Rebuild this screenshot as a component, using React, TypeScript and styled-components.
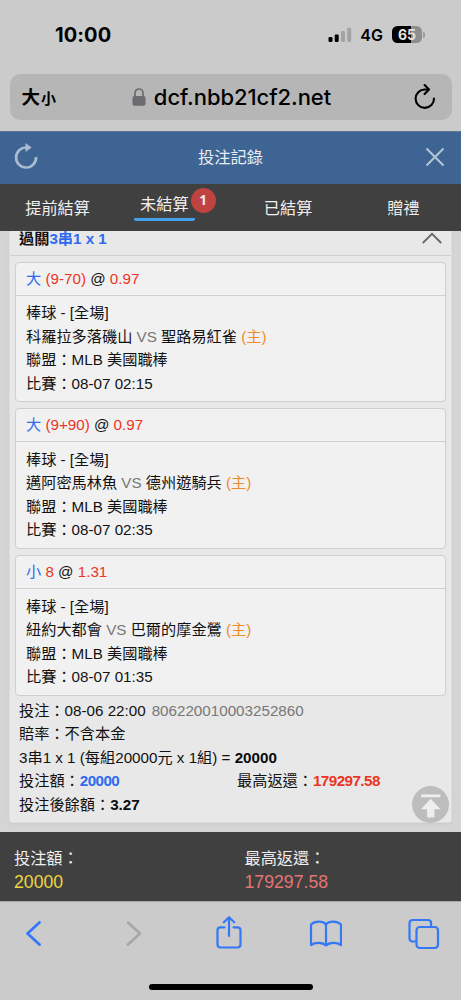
import React from "react";
import styled, { createGlobalStyle } from "styled-components";

const Global = createGlobalStyle`
  *, *::before, *::after { box-sizing: border-box; }
  body { margin: 0; background: #cbcbcb; }
  button { border: 0; padding: 0; background: none; font: inherit; color: inherit; }
  svg { display: block; flex: none; }
`;

const Screen = styled.div`
  width: 461px;
  height: 1000px;
  display: flex;
  flex-direction: column;
  overflow: hidden;
  background: #cbcbcb;
  color: #111;
  font-family: "Liberation Sans", "Noto Sans CJK TC", sans-serif;
`;

const StatusBar = styled.div`
  height: 74px;
  flex: none;
  display: flex;
  align-items: center;
  justify-content: space-between;
  padding: 0 36px 5px 55px;
  font-family: Inter, sans-serif;
  color: #000;
`;
const Clock = styled.span`
  font-size: 20px;
  font-weight: 700;
  line-height: 24px;
  letter-spacing: 0.1px;
`;
const StatusRight = styled.div`
  display: flex;
  align-items: center;
`;
const Network = styled.span`
  margin: 1px 9px 0 8px;
  font-size: 16px;
  font-weight: 600;
  line-height: 20px;
`;
const Battery = styled.span`
  width: 30px;
  height: 17px;
  border-radius: 5.5px;
  background: linear-gradient(90deg, #000 64%, #8e8e8e 64%);
  color: #e4e4e4;
  font-size: 14px;
  font-weight: 700;
  line-height: 17px;
  text-align: center;
`;
const BatteryTip = styled.span`
  width: 2px;
  height: 6px;
  margin-left: 1px;
  border-radius: 0 2px 2px 0;
  background: #999;
`;

const AddressArea = styled.div`
  height: 57px;
  flex: none;
  padding: 0 9.5px;
`;
const AddressBar = styled.div`
  height: 45.5px;
  border-radius: 10px;
  background: #b6b6b6;
  display: grid;
  grid-template-columns: 112px 1fr 110px;
  align-items: center;
  color: #000;
`;
const TextSize = styled.span`
  padding-left: 12px;
  font-family: "Noto Sans CJK TC", sans-serif;
  font-weight: 700;
  font-size: 18.5px;
  line-height: 24px;
  small { font-size: 15px; margin-left: 1px; }
`;
const Url = styled.div`
  display: flex;
  align-items: center;
  justify-content: center;
  gap: 8px;
  white-space: nowrap;
  font: 500 22px/28px Inter, sans-serif;
  letter-spacing: -0.05px;
`;
const Reload = styled.button`
  justify-self: end;
  margin-right: 16px;
`;

const TitleBar = styled.header`
  height: 53px;
  flex: none;
  display: grid;
  grid-template-columns: 52px 1fr 52px;
  align-items: center;
  border-top: 1px solid #5d7696;
  padding-bottom: 2px;
  background: #3e6493;
  color: #e8edf3;
  text-align: center;
  font-size: 16.3px;
  line-height: 24px;
  button { display: flex; justify-content: center; }
`;

const Tabs = styled.nav`
  height: 47px;
  flex: none;
  display: grid;
  grid-template-columns: repeat(4, 1fr);
  background: #404040;
  color: #efefef;
  font-size: 16.2px;
  line-height: 24px;
`;
const Tab = styled.button<{ $active?: boolean }>`
  display: flex;
  justify-content: center;
  align-items: flex-start;
  padding: ${(p) => (p.$active ? "8px 0 0 4px" : "12px 0 0")};
`;
const TabLabel = styled.span<{ $active?: boolean }>`
  height: 29px;
  padding: 0 6px;
  border-bottom: 3px solid ${(p) => (p.$active ? "#43a0ec" : "transparent")};
  border-radius: 2px;
`;
const Badge = styled.span`
  width: 25px;
  height: 25px;
  margin: -4px 0 0 -4px;
  border-radius: 50%;
  background: #bf4341;
  color: #f2e9e9;
  font: 700 13.5px/24px "Noto Sans", sans-serif;
`;

const Scroll = styled.main`
  flex: 1;
  min-height: 0;
  overflow: hidden;
  background: #d5d5d5;
  padding: 0 9px;
`;
const Slip = styled.section`
  height: 592px;
  border: solid #dedede;
  border-width: 0 1px 1px;
  border-radius: 0 0 4px 4px;
  background: #e8e8e8;
  box-shadow: 0 1px 3px #c9c9c9;
  font-size: 15.2px;
`;
const SlipHead = styled.div`
  height: 24.5px;
  display: flex;
  justify-content: space-between;
  padding: 0 9px;
  border-bottom: 1px solid #cfcfcf;
  font-weight: 700;
  line-height: 15px;
  svg { margin-top: 1px; }
`;
const Legs = styled.div`
  display: flex;
  flex-direction: column;
  gap: 6.3px;
  padding: 6px 5px 0;
`;
const Leg = styled.article`
  height: 140.5px;
  border: 1px solid #cfcfcf;
  border-radius: 4px;
  background: #f1f1f1;
`;
const LegHead = styled.div`
  height: 33px;
  padding: 0 10px;
  border-bottom: 1px solid #d0d0d0;
  line-height: 32px;
`;
const LegBody = styled.div`
  padding: 5.7px 10px 0;
  line-height: 23.5px;
  white-space: nowrap;
`;
const Tone = styled.span<{ $c: string }>`
  color: ${(p) => p.$c};
`;
const Bold = styled.b`
  color: #0b0b0b;
`;
const Amount = styled.b<{ $c: string }>`
  color: ${(p) => p.$c};
  letter-spacing: -0.55px;
`;
const Summary = styled.div`
  padding: 3.2px 9px 0;
  line-height: 23.5px;
`;
const Amounts = styled.div`
  display: grid;
  grid-template-columns: 218px 1fr;
`;
const Serial = styled.span`
  margin-left: 6px;
  color: #777;
`;
const ToTop = styled.button`
  position: absolute;
  left: 412px;
  top: 786px;
  width: 37px;
  height: 37px;
  border-radius: 50%;
  background: #bdbdbd;
`;

const Totals = styled.footer`
  height: 70px;
  flex: none;
  display: grid;
  grid-template-columns: 1fr 1fr;
  background: #404040;
  border-bottom: 1px solid #a5a5a5;
  color: #efefef;
  font-size: 16.2px;
`;
const Total = styled.div<{ $c: string }>`
  position: relative;
  padding: 14px 14px 0;
  line-height: 24px;
  strong {
    display: block;
    font-weight: 400;
    font-size: 17.7px;
    color: ${(p) => p.$c};
  }
  & + &::before {
    content: "";
    position: absolute;
    left: 0;
    top: 24px;
    width: 1px;
    height: 23px;
    background: #676767;
  }
`;

const BrowserTools = styled.div`
  height: 63px;
  flex: none;
  display: flex;
  justify-content: space-between;
  align-items: center;
  padding: 0 20px 1px 17px;
`;
const HomeArea = styled.div`
  height: 35px;
  flex: none;
  display: flex;
  justify-content: center;
  align-items: flex-start;
  padding-top: 19px;
`;
const HomeBar = styled.div`
  width: 164px;
  height: 6px;
  border-radius: 3px;
  background: #000;
`;

const BLUE = "#2f6bf0";
const RED = "#ee3425";
const ORANGE = "#f08c2b";
const IOS = "#3478f6";

const games = [
  { pick: "大", line: "(9-70)", odds: "0.97", away: "科羅拉多落磯山", home: "聖路易紅雀", time: "08-07 02:15" },
  { pick: "大", line: "(9+90)", odds: "0.97", away: "邁阿密馬林魚", home: "德州遊騎兵", time: "08-07 02:35" },
  { pick: "小", line: "8", odds: "1.31", away: "紐約大都會", home: "巴爾的摩金鶯", time: "08-07 01:35" },
];

export default function App() {
  return (
    <Screen>
      <Global />
      <StatusBar>
        <Clock>10:00</Clock>
        <StatusRight>
          <svg width="24" height="16" viewBox="0 0 24 16">
            <rect x="0.5" y="10" width="4" height="5" rx="1.2" fill="#000" />
            <rect x="6.7" y="7.4" width="4" height="7.6" rx="1.2" fill="#000" />
            <rect x="13" y="4" width="4" height="11" rx="1.2" fill="#a3a3a3" />
            <rect x="19.2" y="0.7" width="4" height="14.3" rx="1.2" fill="#a3a3a3" />
          </svg>
          <Network>4G</Network>
          <Battery>65</Battery>
          <BatteryTip />
        </StatusRight>
      </StatusBar>
      <AddressArea>
        <AddressBar>
          <TextSize>大<small>小</small></TextSize>
          <Url>
            <svg width="14" height="18" viewBox="0 0 14 18">
              <path d="M3 9V5a4 4 0 0 1 8 0v4" fill="none" stroke="#6c6c70" strokeWidth="1.7" />
              <rect x="0.5" y="8" width="13" height="9.7" rx="2" fill="#6c6c70" />
            </svg>
            <span>dcf.nbb21cf2.net</span>
          </Url>
          <Reload aria-label="reload">
            <svg width="22" height="26" viewBox="0 0 22 26" fill="none" stroke="#000" strokeWidth="2.1" strokeLinecap="round" strokeLinejoin="round">
              <path d="M14 5.500H10.800A9.200 9.200 0 1 0 20 14.500" />
              <path d="M10.600 1l4.400 4.500-4.400 4.600" />
            </svg>
          </Reload>
        </AddressBar>
      </AddressArea>
      <TitleBar>
        <button aria-label="refresh">
          <svg width="26" height="28" viewBox="0 0 26 28">
            <path d="M13.500 4.500A10 10 0 1 0 23.100 14" fill="none" stroke="#a9bbd0" strokeWidth="2.7" />
            <path d="M12.500 0l6.200 4.500-6.200 4.400z" fill="#a9bbd0" />
          </svg>
        </button>
        <span>投注記錄</span>
        <button aria-label="close">
          <svg width="20" height="20" viewBox="0 0 20 20" stroke="#b5c4d6" strokeWidth="2">
            <path d="M1.500 1.500l17 17M18.500 1.500l-17 17" />
          </svg>
        </button>
      </TitleBar>
      <Tabs>
        <Tab><TabLabel>提前結算</TabLabel></Tab>
        <Tab $active>
          <TabLabel $active>未結算</TabLabel>
          <Badge>1</Badge>
        </Tab>
        <Tab><TabLabel>已結算</TabLabel></Tab>
        <Tab><TabLabel>贈禮</TabLabel></Tab>
      </Tabs>
      <Scroll>
        <Slip>
          <SlipHead>
            <span>過關<Tone $c={BLUE}>3串1 x 1</Tone></span>
            <svg width="20" height="12" viewBox="0 0 20 12" fill="none" stroke="#666" strokeWidth="1.8">
              <path d="M0.800 11L10 1.800 19.200 11" />
            </svg>
          </SlipHead>
          <Legs>
            {games.map((g) => (
              <Leg key={g.away}>
                <LegHead>
                  <Tone $c={BLUE}>{g.pick}</Tone> <Tone $c={RED}>{g.line}</Tone> @ <Tone $c={RED}>{g.odds}</Tone>
                </LegHead>
                <LegBody>
                  <div>棒球 - [全場]</div>
                  <div>{g.away} <Tone $c="#777">VS</Tone> {g.home} <Tone $c={ORANGE}>(主)</Tone></div>
                  <div>聯盟：MLB 美國職棒</div>
                  <div>比賽：{g.time}</div>
                </LegBody>
              </Leg>
            ))}
          </Legs>
          <Summary>
            <div>投注：08-06 22:00<Serial>806220010003252860</Serial></div>
            <div>賠率：不含本金</div>
            <div>3串1 x 1 (每組20000元 x 1組) = <Bold>20000</Bold></div>
            <Amounts>
              <span>投注額：<Amount $c={BLUE}>20000</Amount></span>
              <span>最高返還：<Amount $c={RED}>179297.58</Amount></span>
            </Amounts>
            <div>投注後餘額：<Bold>3.27</Bold></div>
          </Summary>
        </Slip>
        <ToTop aria-label="top">
          <svg width="37" height="37" viewBox="0 0 37 37" fill="#eee">
            <rect x="9" y="8.5" width="19.5" height="2.8" rx="0.8" />
            <path d="M18.700 12.800l9.800 10.400h-6v7.200q0 1-1 1h-5.400q-1 0-1-1v-7.200H9z" />
          </svg>
        </ToTop>
      </Scroll>
      <Totals>
        <Total $c="#ecd63f">投注額：<strong>20000</strong></Total>
        <Total $c="#e57474">最高返還：<strong>179297.58</strong></Total>
      </Totals>
      <BrowserTools>
        <svg width="32" height="34" viewBox="0 0 32 34" fill="none" stroke={IOS} strokeWidth="2.8" strokeLinecap="round" strokeLinejoin="round">
          <path d="M22.500 6.500L10.500 17.500l12 11" />
        </svg>
        <svg width="32" height="34" viewBox="0 0 32 34" fill="none" stroke="#a6a6a6" strokeWidth="2.6" strokeLinecap="round" strokeLinejoin="round">
          <path d="M13 6.500l12 11-12 11" />
        </svg>
        <svg width="28" height="34" viewBox="-2 0 28 34" fill="none" stroke={IOS} strokeWidth="2.2" strokeLinecap="round" strokeLinejoin="round">
          <path d="M8.500 11.300H4.500q-3 0-3 3V28.500q0 3 3 3h17q3 0 3-3V14.300q0-3-3-3h-4M13 20V1.500M7.800 6.200L13 1.200l5.200 5" />
        </svg>
        <svg width="34" height="34" viewBox="-2 0 34 34" fill="none" stroke={IOS} strokeWidth="2.2" strokeLinecap="round" strokeLinejoin="round">
          <path d="M16 8.500C13 4.700 5 4.700 1 8.500V29C5 26 12.500 26 16 29.500C19.500 26 27 26 31 29V8.500C27 4.700 19 4.700 16 8.500V29.500" />
        </svg>
        <svg width="33" height="34" viewBox="0 0 33 34" fill="none" stroke={IOS} strokeWidth="2.2" strokeLinejoin="round">
          <path d="M8 25.500H4.800q-3.300 0-3.300-3.300V7.300q0-3.300 3.300-3.300h15q3.300 0 3.300 3.300v3.500" />
          <rect x="8.500" y="11" width="21.500" height="21" rx="3.200" />
        </svg>
      </BrowserTools>
      <HomeArea><HomeBar /></HomeArea>
    </Screen>
  );
}
